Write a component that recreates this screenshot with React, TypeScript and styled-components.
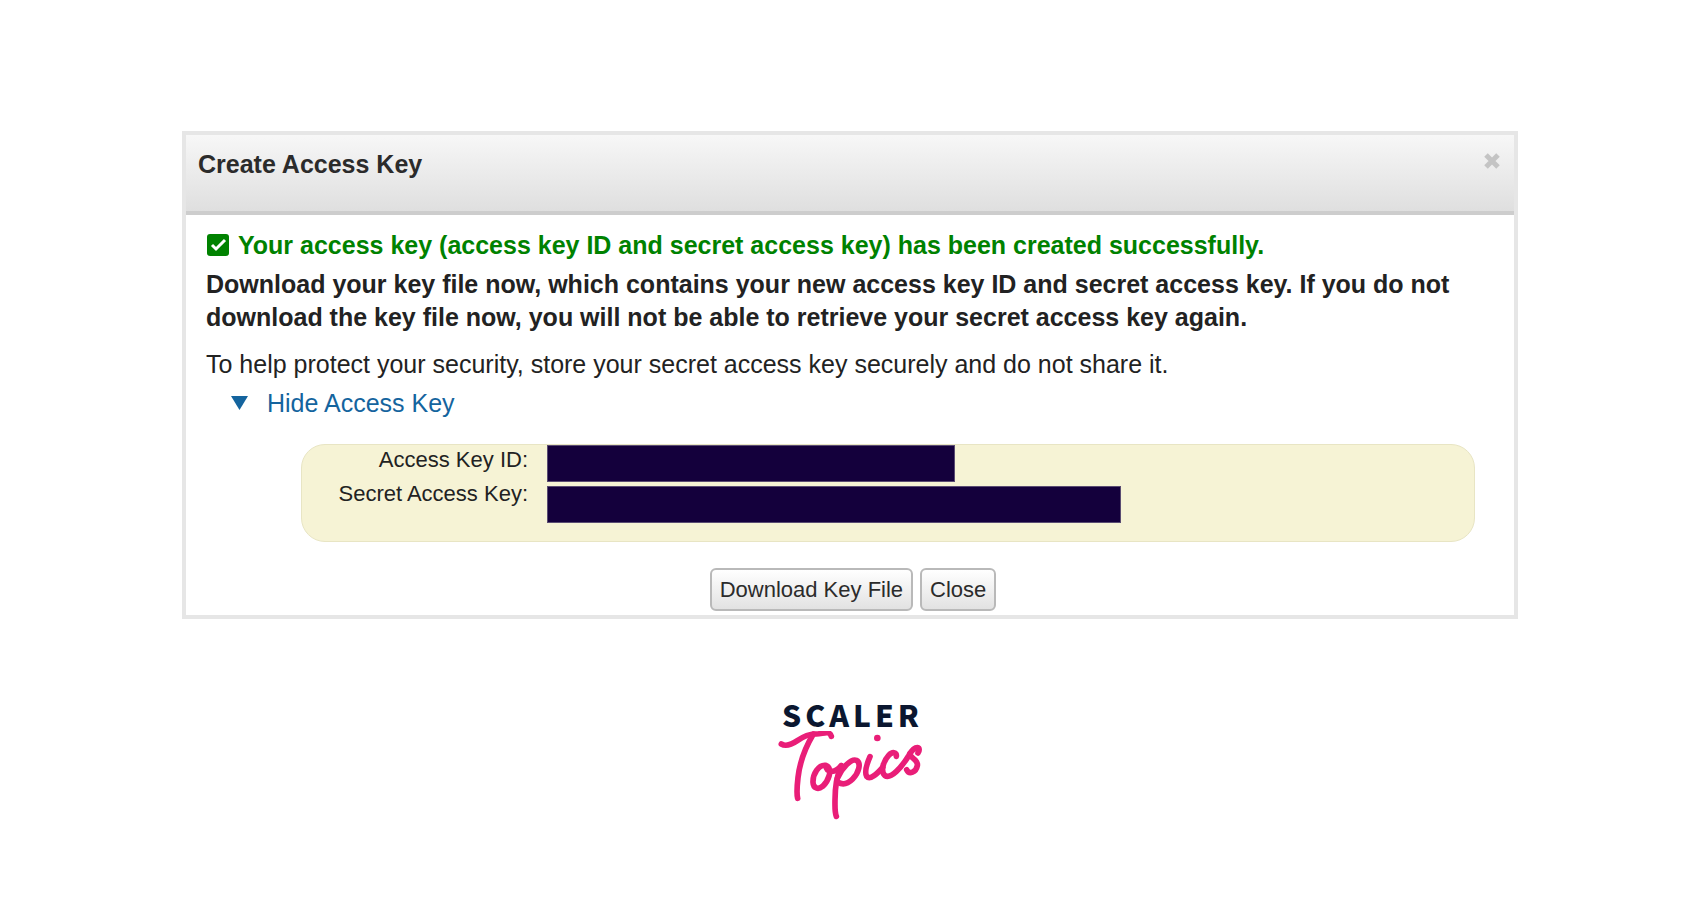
import React, { useState } from "react";
import styled, { createGlobalStyle } from "styled-components";

const GlobalStyle = createGlobalStyle`
  *, *::before, *::after { box-sizing: border-box; }
  body {
    margin: 0;
    background: #fff;
    color: #222;
    font-family: "Liberation Sans", Arial, sans-serif;
  }
`;

const Page = styled.main`
  display: flex;
  flex-direction: column;
  align-items: center;
  padding: 131px 182px 80px;
`;

const Dialog = styled.section`
  width: 100%;
  border: 4px solid #e6e6e6;
  background: #fff;
`;

const DialogHeader = styled.header`
  display: flex;
  justify-content: space-between;
  align-items: flex-start;
  height: 80px;
  padding: 12px;
  border-bottom: 4px solid #cdcdcd;
  background: linear-gradient(#f7f7f7, #dfdfdf);
`;

const Title = styled.h1`
  margin: 0;
  font-size: 25px;
  line-height: 34px;
  color: #2b2b2b;
`;

const DismissButton = styled.button`
  display: flex;
  padding: 5px 0;
  border: 0;
  background: none;
  cursor: pointer;
`;

const DialogBody = styled.div`
  padding: 14px 20px 4px;
`;

const Success = styled.p`
  display: flex;
  align-items: center;
  gap: 9px;
  margin: 0 0 7px;
  font-size: 25px;
  font-weight: bold;
  line-height: 32px;
  color: #008200;
`;

const Message = styled.p<{ $strong?: boolean }>`
  margin: 0 0 ${(p) => (p.$strong ? 14 : 7)}px;
  font-size: 25px;
  font-weight: ${(p) => (p.$strong ? "bold" : "normal")};
  line-height: ${(p) => (p.$strong ? 33 : 32)}px;
`;

const Toggle = styled.button`
  display: flex;
  align-items: center;
  gap: 19px;
  margin: 0 0 25px 25px;
  padding: 0;
  border: 0;
  background: none;
  font: 25px/32px "Liberation Sans", Arial, sans-serif;
  color: #14649e;
  cursor: pointer;
`;

const KeyPanel = styled.div`
  display: flex;
  gap: 19px;
  margin: 0 19px 26px 95px;
  padding: 0 0 18px;
  border: 1px solid #e8e5c4;
  border-radius: 24px;
  background: #f6f3d5;
`;

const KeyColumn = styled.div<{ $labels?: boolean }>`
  display: flex;
  flex: ${(p) => (p.$labels ? "0 0 226px" : "1")};
  flex-direction: column;
  align-items: ${(p) => (p.$labels ? "flex-end" : "flex-start")};
  gap: 4px;
`;

const KeyLabel = styled.label`
  font-size: 22px;
  line-height: 30px;
`;

const KeyValue = styled.output<{ $width: number }>`
  width: ${(p) => p.$width}px;
  max-width: 100%;
  height: 37px;
  border: 1px solid #5a4c72;
  background: #14003c;
`;

const Actions = styled.footer`
  display: flex;
  justify-content: center;
  gap: 7px;
  padding-left: 6px;
`;

const ActionButton = styled.button`
  height: 43px;
  padding: 0 8px;
  border: 2px solid #b9b9b9;
  border-radius: 6px;
  background: linear-gradient(#fff, #e2e2e2);
  font: 22px/38px "Liberation Sans", Arial, sans-serif;
  color: #2b2b2b;
  cursor: pointer;
`;

const Brand = styled.div`
  display: flex;
  flex-direction: column;
  align-items: center;
  margin-top: 75px;
`;

const BrandName = styled.span`
  padding-left: 5px;
  font: 900 30px/40px "Noto Sans CJK JP", "Noto Sans", sans-serif;
  letter-spacing: 4px;
  color: #0b1730;
`;

const BrandScript = styled.svg`
  margin-top: -3px;
`;

export default function App() {
  const [open, setOpen] = useState(true);
  return (
    <>
      <GlobalStyle />
      <Page>
        <Dialog role="dialog" aria-labelledby="dialog-title">
          <DialogHeader>
            <Title id="dialog-title">Create Access Key</Title>
            <DismissButton type="button" aria-label="Dismiss">
              <svg width="20" height="18" viewBox="0 0 20 18" aria-hidden="true">
                <path d="M4 3 16 15M16 3 4 15" stroke="#c4c4c4" strokeWidth="5" />
              </svg>
            </DismissButton>
          </DialogHeader>
          <DialogBody>
            <Success>
              <svg width="23" height="22" viewBox="0 0 23 22" aria-hidden="true">
                <rect x="1" width="22" height="22" rx="3" fill="#008200" />
                <path d="m6 11 4 4 9-9" fill="none" stroke="#fff" strokeWidth="3" />
              </svg>
              Your access key (access key ID and secret access key) has been created successfully.
            </Success>
            <Message $strong>
              Download your key file now, which contains your new access key ID and secret access
              key. If you do not download the key file now, you will not be able to retrieve your
              secret access key again.
            </Message>
            <Message>
              To help protect your security, store your secret access key securely and do not share it.
            </Message>
            <Toggle type="button" aria-expanded={open} onClick={() => setOpen(!open)}>
              <svg width="17" height="14" viewBox="0 0 17 14" aria-hidden="true">
                <path d="M0 0H17L8.500 14Z" fill="#14649e" />
              </svg>
              Hide Access Key
            </Toggle>
            {open && (
              <KeyPanel>
                <KeyColumn $labels>
                  <KeyLabel htmlFor="key-id">Access Key ID:</KeyLabel>
                  <KeyLabel htmlFor="key-secret">Secret Access Key:</KeyLabel>
                </KeyColumn>
                <KeyColumn>
                  <KeyValue id="key-id" $width={408} />
                  <KeyValue id="key-secret" $width={574} />
                </KeyColumn>
              </KeyPanel>
            )}
            <Actions>
              <ActionButton type="button">Download Key File</ActionButton>
              <ActionButton type="button">Close</ActionButton>
            </Actions>
          </DialogBody>
        </Dialog>
        <Brand>
          <BrandName>SCALER</BrandName>
          <BrandScript width="144" height="90" viewBox="54 126 432 270" role="img" aria-label="Topics">
            <g fill="none" stroke="#e91e78" strokeWidth="17" strokeLinecap="round" strokeLinejoin="round">
              <path d="M64 165C78 174 96 166 112 155C132 141 146 134 168 135C188 136 208 122 214 142" />
              <path d="M160 135C138 172 119 220 114 266C111 292 109 312 113 328" />
              <path d="M197 229C176 226 158 256 159 280C160 298 174 303 188 292C206 276 216 244 204 233C202 231 200 230 197 229C200 252 224 254 244 230" />
              <path d="M244 230C230 260 225 300 225 334C225 356 224 370 229 382" />
              <path d="M232 268C246 236 274 208 289 214C305 222 296 252 278 270C264 284 248 288 234 280" />
              <path d="M330 203C320 226 312 248 320 262C330 274 350 256 368 235" />
              <path d="M409 202C411 189 397 187 386 199C370 216 361 246 374 259C392 272 424 236 446 200C454 186 462 176 472 176C480 177 478 186 474 192" />
              <path d="M450 194C450 208 476 212 472 230C468 250 448 258 440 242" />
            </g>
            <circle cx="352" cy="147" r="10" fill="#e91e78" />
          </BrandScript>
        </Brand>
      </Page>
    </>
  );
}
